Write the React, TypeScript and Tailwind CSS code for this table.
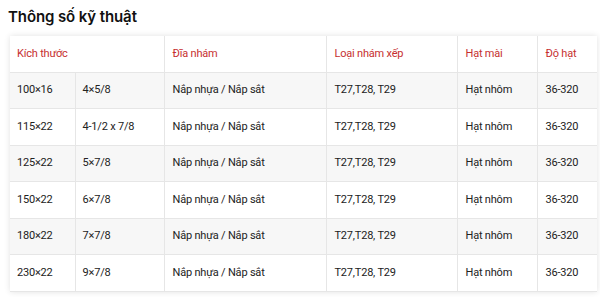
import React from 'react';

const rows = [
  ['100×16', '4×5/8'],
  ['115×22', '4-1/2 x 7/8'],
  ['125×22', '5×7/8'],
  ['150×22', '6×7/8'],
  ['180×22', '7×7/8'],
  ['230×22', '9×7/8'],
];

export default function App() {
  return (
    <div className="w-[600px] h-[297px] bg-white overflow-hidden font-['Inter',sans-serif] text-[#222]">
      <h2 className="pl-[8px] pt-[5px] text-[15px] leading-[24px] font-semibold tracking-[-0.1px] text-[#111]">
        Thông số kỹ thuật
      </h2>
      <div className="ml-[10px] mt-[7px] w-[587px] shadow-[0_0_6px_rgba(0,0,0,0.12)]">
        <table className="w-full table-fixed border-collapse font-['Roboto',sans-serif] text-[11px] tracking-[-0.2px]">
          <colgroup>
            <col className="w-[65px]" />
            <col className="w-[89px]" />
            <col className="w-[162px]" />
            <col className="w-[131px]" />
            <col className="w-[80px]" />
            <col className="w-[60px]" />
          </colgroup>
          <thead>
            <tr className="h-[36px] bg-white text-[#c62f2f]">
              <th colSpan={2} className="border border-[#e6e6e6] border-t-0 border-l-0 px-[7px] text-left font-normal">Kích thước</th>
              <th className="border border-[#e6e6e6] border-t-0 px-[8px] text-left font-normal">Đĩa nhám</th>
              <th className="border border-[#e6e6e6] border-t-0 px-[8px] text-left font-normal">Loại nhám xếp</th>
              <th className="border border-[#e6e6e6] border-t-0 px-[8px] text-left font-normal">Hạt mài</th>
              <th className="border border-[#e6e6e6] border-t-0 border-r-0 px-[8px] text-left font-normal">Độ hạt</th>
            </tr>
          </thead>
          <tbody>
            {rows.map((r, i) => (
              <tr key={i} className={`h-[36.5px] ${i % 2 === 0 ? 'bg-[#f7f7f7]' : 'bg-white'}`}>
                <td className="border border-[#e6e6e6] border-l-0 px-[7px]">{r[0]}</td>
                <td className="border border-[#e6e6e6] px-[7px]">{r[1]}</td>
                <td className="border border-[#e6e6e6] px-[8px]">Nắp nhựa / Nắp sắt</td>
                <td className="border border-[#e6e6e6] px-[8px]">T27,T28, T29</td>
                <td className="border border-[#e6e6e6] px-[8px]">Hạt nhôm</td>
                <td className="border border-[#e6e6e6] border-r-0 px-[8px]">36-320</td>
              </tr>
            ))}
          </tbody>
        </table>
      </div>
    </div>
  );
}
